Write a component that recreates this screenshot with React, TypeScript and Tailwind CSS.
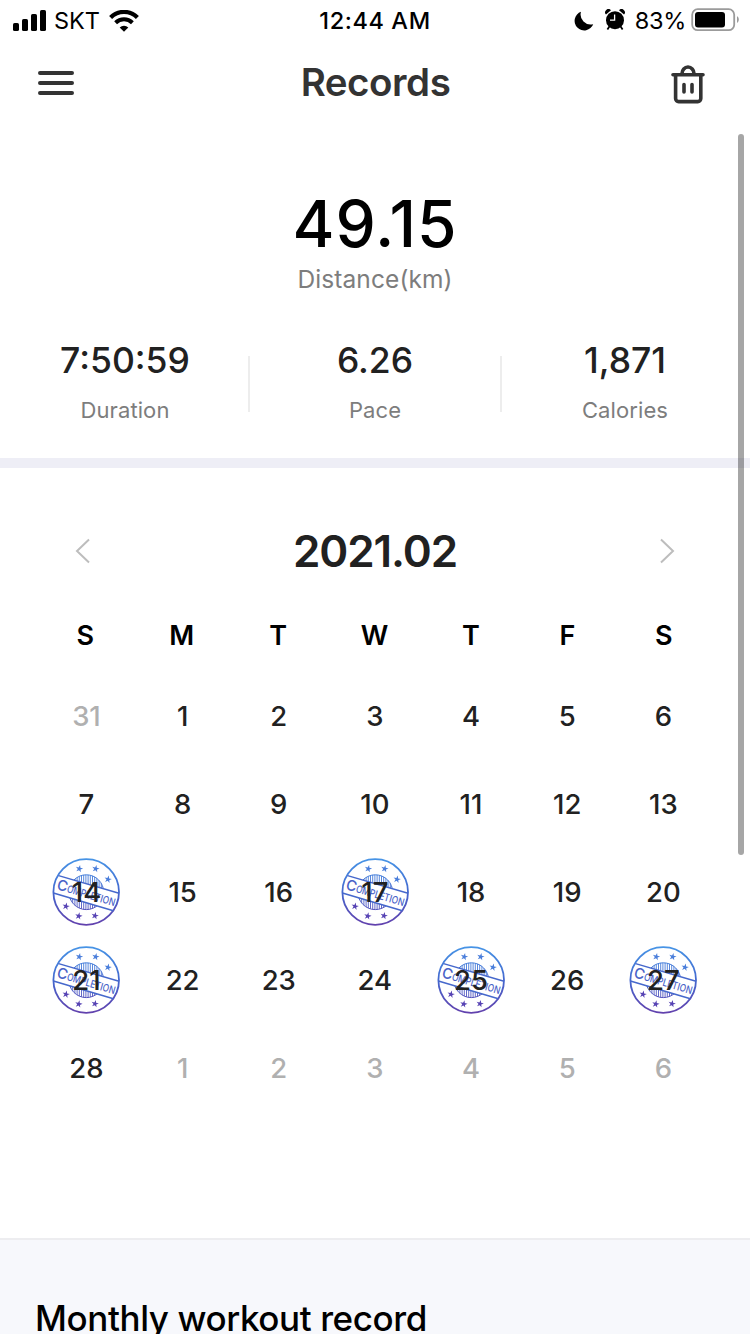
import clsx from "clsx";

const WEEKDAYS = ["S", "M", "T", "W", "T", "F", "S"];

const STATS = [
  { label: "Duration", value: "7:50:59" },
  { label: "Pace", value: "6.26" },
  { label: "Calories", value: "1,871" },
];

const COMPLETED = [14, 17, 21, 25, 27];

type Day = { date: number; outside: boolean };

const DAYS: Day[] = [
  { date: 31, outside: true },
  ...Array.from({ length: 28 }, (_, i) => ({ date: i + 1, outside: false })),
  ...Array.from({ length: 6 }, (_, i) => ({ date: i + 1, outside: true })),
];

const STARS = [
  [27.3, 10.7],
  [43.7, 10.7],
  [56, 21.3],
  [14, 48.3],
  [26.7, 58],
  [43, 57.7],
];

function StatusBar() {
  return (
    <div className="grid h-[41px] grid-cols-3 items-center text-[23.5px] leading-none text-black">
      <div className="flex items-center pl-[13px]">
        <svg className="-mt-px" width="33" height="21" viewBox="0 0 33 21">
          <rect x="0" y="13" width="6" height="8" rx="1.6" />
          <rect x="9" y="9" width="6" height="12" rx="1.6" />
          <rect x="18" y="4" width="6" height="17" rx="1.6" />
          <rect x="27" y="0" width="6" height="21" rx="1.6" />
        </svg>
        <span className="ml-2">SKT</span>
        <svg className="ml-[9px]" width="30" height="22" viewBox="0 0 30 22" fill="none" stroke="black">
          <path d="M1.6 7.4a19 19 0 0 1 26.8 0" strokeWidth="4.2" />
          <path d="M6.6 12.8a12 12 0 0 1 16.8 0" strokeWidth="4" />
          <path d="M15 21.8l-4.3-4.4a6.2 6.2 0 0 1 8.6 0z" fill="black" stroke="none" />
        </svg>
      </div>
      <div className="text-center font-medium tracking-[0.6px] whitespace-nowrap">12:44 AM</div>
      <div className="flex items-center justify-end pr-[10px]">
        <svg width="20" height="20" viewBox="0 0 20 20">
          <path d="M7 .8a9.6 9.6 0 1 0 12.2 12.4A10 10 0 0 1 7 .8z" />
        </svg>
        <svg className="ml-[11px] -mt-[2px]" width="20" height="22" viewBox="0 0 20 22">
          <circle cx="10" cy="11.2" r="9" />
          <path d="M1 5.6a3.3 3.3 0 0 1 5-4.4zM19 5.6a3.3 3.3 0 0 0-5-4.4z" />
          <path d="M4.4 17.6L2.4 20.4M15.6 17.6l2 2.8" stroke="black" strokeWidth="1.8" />
          <path d="M9.6 5.6v5.6H5" stroke="white" strokeWidth="1.3" fill="none" />
        </svg>
        <span className="ml-[10px] tracking-[-0.3px]">83%</span>
        <svg className="ml-[5px] -mt-px" width="49" height="24" viewBox="0 0 49 24">
          <rect x="1.2" y="1.2" width="42" height="21" rx="5.5" fill="none" stroke="#9b9b9b" strokeWidth="1.8" />
          <rect x="4" y="3.9" width="30" height="15.6" rx="3" />
          <path d="M46 8.3c2.4.8 2.4 5.8 0 6.6z" fill="#9b9b9b" />
        </svg>
      </div>
    </div>
  );
}

function Header() {
  return (
    <header className="flex h-[84px] items-center justify-between pr-[45px] pl-[38px] text-[#333]">
      <svg width="36" height="24" viewBox="0 0 36 24" stroke="currentColor" strokeWidth="4" strokeLinecap="round">
        <path d="M2 2h32M2 12h32M2 22h32" />
      </svg>
      <h1 className="-mt-[2px] ml-[6px] text-[38.5px] leading-none font-semibold tracking-[-0.45px]">Records</h1>
      <svg
        className="mt-px"
        width="34"
        height="40"
        viewBox="0 0 34 40"
        fill="none"
        stroke="currentColor"
        strokeWidth="3.6"
        strokeLinecap="round"
      >
        <path d="M2 10.8h30" />
        <path d="M4.6 11v23.6a3 3 0 0 0 3 3h19.2a3 3 0 0 0 3-3V11" />
        <path d="M11 9.6a6 6.6 0 0 1 12 0" />
        <path d="M13 20.6v7.4M21 20.6v7.4" />
      </svg>
    </header>
  );
}

function Summary() {
  return (
    <section className="h-[333px] pt-[65px] text-center">
      <p className="text-[64px] leading-[68px] font-medium tracking-[0.9px] text-black">49.15</p>
      <p className="mt-[2px] text-[24.5px] leading-[38px] tracking-[0.1px] text-[#7d7d7d]">Distance(km)</p>
      <div className="mt-[41px] flex justify-between">
        {STATS.map((stat, i) => (
          <div key={stat.label} className={clsx("flex items-start", i === 1 ? "w-[254px]" : "w-[248px]")}>
            {i === 1 && <div className="mt-[17px] h-14 w-[2px] bg-[#ededed]" />}
            <div className={clsx("flex-1", i === 0 && "pl-[2px]", i === 2 && "pr-[2px]")}>
              <p className="text-[35.5px] leading-[44px] font-medium text-[#212121]">{stat.value}</p>
              <p className="mt-[5px] text-[22px] leading-[44px] tracking-[0.1px] text-[#7d7d7d]">{stat.label}</p>
            </div>
            {i === 1 && <div className="mt-[17px] h-14 w-[2px] bg-[#ededed]" />}
          </div>
        ))}
      </div>
    </section>
  );
}

function Stamp() {
  return (
    <svg className="absolute size-[68px]" viewBox="0 0 68 68" fill="none" stroke="url(#ink)">
      <circle cx="34.2" cy="34" r="32.8" strokeWidth="1.8" />
      <g clipPath="url(#outside-band)" stroke="url(#ink)">
        <circle cx="34.3" cy="34.2" r="17.4" strokeWidth="1" />
        <path
          clipPath="url(#seal)"
          strokeWidth="0.9"
          d="M18.5 16v36M20.7 16v36M22.9 16v36M25.1 16v36M27.3 16v36M29.5 16v36M31.7 16v36M33.9 16v36M36.1 16v36M38.3 16v36M40.5 16v36M42.7 16v36M44.9 16v36M47.1 16v36M49.3 16v36"
        />
      </g>
      <path d="M6.6 17.6L67 35.3M1.4 35L61.4 52.8" stroke="#4668cc" strokeWidth="1.5" />
      {STARS.map(([x, y]) => (
        <path
          key={`${x}-${y}`}
          transform={`translate(${x} ${y}) rotate(12)`}
          d="M0-3.8L.9-1.1 3.7-1.1 1.4.6 2.3 3.2 0 1.6-2.3 3.2-1.4.6-3.7-1.1-.9-1.1z"
          fill={y < 34 ? "#4a7edb" : "#5743b4"}
          stroke="none"
        />
      ))}
      <g transform="translate(4 31) rotate(16.5)" fill="#4a63c8" stroke="none">
        <text fontSize="14.5">C</text>
        <text x="10.6" fontSize="10.5" textLength="50" lengthAdjust="spacingAndGlyphs" fontWeight="500">
          OMPLETION
        </text>
      </g>
    </svg>
  );
}

// Gradient and clips shared by every stamp
function StampDefs() {
  return (
    <svg className="absolute size-0">
      <defs>
        <linearGradient id="ink" gradientUnits="userSpaceOnUse" x1="0" y1="0" x2="0" y2="68">
          <stop offset="0" stopColor="#4795e6" />
          <stop offset="0.5" stopColor="#4468cf" />
          <stop offset="1" stopColor="#6340ac" />
        </linearGradient>
        <clipPath id="seal">
          <circle cx="34.3" cy="34.2" r="17.4" />
        </clipPath>
        <clipPath id="outside-band">
          <path d="M0 0H68V35.5L0 15.7zM0 34.6L68 54.7V68H0z" />
        </clipPath>
      </defs>
    </svg>
  );
}

function Calendar() {
  return (
    <section className="h-[770px] pt-[48px]">
      <div className="flex h-[70px] items-center justify-between px-[75px]">
        <svg width="16" height="26" viewBox="0 0 16 26" fill="none" stroke="#bdbdbd" strokeWidth="2">
          <path d="M14 1.5L2 13l12 11.5" />
        </svg>
        <h2 className="text-[44px] leading-[46px] font-semibold tracking-[-1.1px] text-[#212121]">2021.02</h2>
        <svg width="16" height="26" viewBox="0 0 16 26" fill="none" stroke="#bdbdbd" strokeWidth="2">
          <path d="M2 1.5L14 13 2 24.5" />
        </svg>
      </div>
      <div className="ml-[37px] grid w-[675px] grid-cols-7 text-center text-[27px] leading-[100px] font-semibold text-black">
        {WEEKDAYS.map((name, i) => (
          <div key={i}>{name}</div>
        ))}
      </div>
      <div className="-mt-[14px] ml-[38.4px] grid w-[673px] grid-cols-7 text-[27.5px] font-medium">
        {DAYS.map(({ date, outside }, i) => (
          <div
            key={i}
            className={clsx(
              "relative flex h-[88px] items-center justify-center leading-none",
              outside ? "text-[#b0b0b0]" : "text-[#212121]"
            )}
          >
            {!outside && COMPLETED.includes(date) && <Stamp />}
            <span className="relative mt-[2px]">{date}</span>
          </div>
        ))}
      </div>
    </section>
  );
}

export default function App() {
  return (
    <div className="relative h-[1334px] w-[750px] overflow-hidden bg-white font-['Inter',sans-serif]">
      <StatusBar />
      <Header />
      <Summary />
      <div className="h-[10px] bg-[#eeeef6]" />
      <StampDefs />
      <Calendar />
      <section className="h-24 border-t-2 border-[#ededf0] bg-[#f7f8fc] pt-[53px] pl-[35px]">
        <h2 className="text-[35px] leading-[50px] font-medium tracking-[-0.4px] text-black">Monthly workout record</h2>
      </section>
      <div className="absolute top-[134px] right-[6px] h-[721px] w-[6px] rounded-full bg-black/35" />
    </div>
  );
}
